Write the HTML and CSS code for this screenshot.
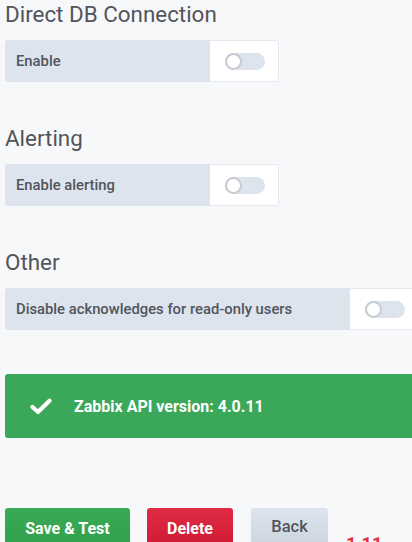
FILE: index.html
```html
<!DOCTYPE html>
<html>
<head>
<meta charset="utf-8">
<link rel="stylesheet" href="styles.css">
</head>
<body>
<div class="page">
  <h3 class="section-title">Direct DB Connection</h3>
  <div class="form-row">
    <div class="label w-205">Enable</div>
    <div class="switch-cell"><span class="switch"><span class="knob"></span></span></div>
  </div>

  <h3 class="section-title gap-top">Alerting</h3>
  <div class="form-row">
    <div class="label w-205">Enable alerting</div>
    <div class="switch-cell"><span class="switch"><span class="knob"></span></span></div>
  </div>

  <h3 class="section-title gap-top">Other</h3>
  <div class="form-row">
    <div class="label w-345">Disable acknowledges for read-only users</div>
    <div class="switch-cell"><span class="switch"><span class="knob"></span></span></div>
  </div>

  <div class="alert">
    <svg class="check" width="22" height="17" viewBox="0 0 22 17"><path d="M2.5 9 L8 14 L19.5 2.8" fill="none" stroke="#fff" stroke-width="4.2" stroke-linecap="round" stroke-linejoin="round"/></svg>
    <span class="alert-text">Zabbix API version: 4.0.11</span>
  </div>

  <div class="buttons">
    <button class="btn btn-green">Save &amp; Test</button>
    <button class="btn btn-red">Delete</button>
    <button class="btn btn-gray">Back</button>
    <span class="red-note">1.11</span>
  </div>
</div>
</body>
</html>
```

FILE: styles.css
```css
html, body {
  margin: 0;
  padding: 0;
  background: #f7f8fa;
  font-family: Roboto, "Liberation Sans", sans-serif;
  color: #52545c;
  overflow: hidden;
}
.page {
  padding-left: 5px;
  width: 460px;
}
.section-title {
  margin: 0 0 12px 0;
  font-size: 22.4px;
  line-height: 28px;
  font-weight: 400;
  color: #52545c;
}
.gap-top {
  margin-top: 42px;
}
.form-row {
  display: flex;
  height: 42px;
}
.label {
  background: #dde4ed;
  border-radius: 3px 0 0 3px;
  display: flex;
  align-items: center;
  padding-left: 11px;
  box-sizing: border-box;
  font-size: 14.8px;
  font-weight: 500;
  color: #52545c;
}
.w-205 { width: 205px; }
.w-345 { width: 345px; }
.switch-cell {
  width: 69px;
  box-sizing: border-box;
  background: #fff;
  border: 1px solid #e6e9ef;
  border-left: none;
  border-radius: 0 3px 3px 0;
  display: flex;
  align-items: center;
  padding-left: 15px;
}
.switch {
  position: relative;
  width: 40px;
  height: 17px;
  border-radius: 9px;
  background: #dde4ed;
  display: block;
}
.knob {
  position: absolute;
  left: 0;
  top: 0;
  width: 17px;
  height: 17px;
  box-sizing: border-box;
  border-radius: 50%;
  background: #fff;
  border: 2px solid #c7cbd2;
}
.alert {
  margin-top: 44px;
  height: 64px;
  background: #3aa858;
  border-radius: 3px;
  display: flex;
  align-items: center;
  padding-left: 25px;
  gap: 22px;
}
.check { display: block; }
.alert-text {
  color: #fff;
  font-size: 16px;
  font-weight: 700;
}
.buttons {
  margin-top: 70px;
  display: flex;
  align-items: flex-start;
}
.btn {
  height: 40px;
  border: none;
  border-radius: 3px;
  font-family: Roboto, "Liberation Sans", sans-serif;
  font-size: 16px;
  font-weight: 700;
  padding: 0;
  margin-right: 18px;
}
.btn-green {
  width: 125px;
  margin-right: 17px;
  color: #fff;
  background: linear-gradient(#3aaa57, #31a04c);
}
.btn-red {
  width: 86px;
  color: #fff;
  background: linear-gradient(#e02b45, #cf1a33);
}
.btn-gray {
  width: 77px;
  color: #52545c;
  font-weight: 500;
  font-size: 16.5px;
  padding-bottom: 3px;
  background: linear-gradient(#dde4ed, #cbd4df);
}
.red-note {
  margin-top: 25px;
  color: #e02f44;
  font-size: 18px;
  font-weight: 700;
  line-height: 22px;
}
```
